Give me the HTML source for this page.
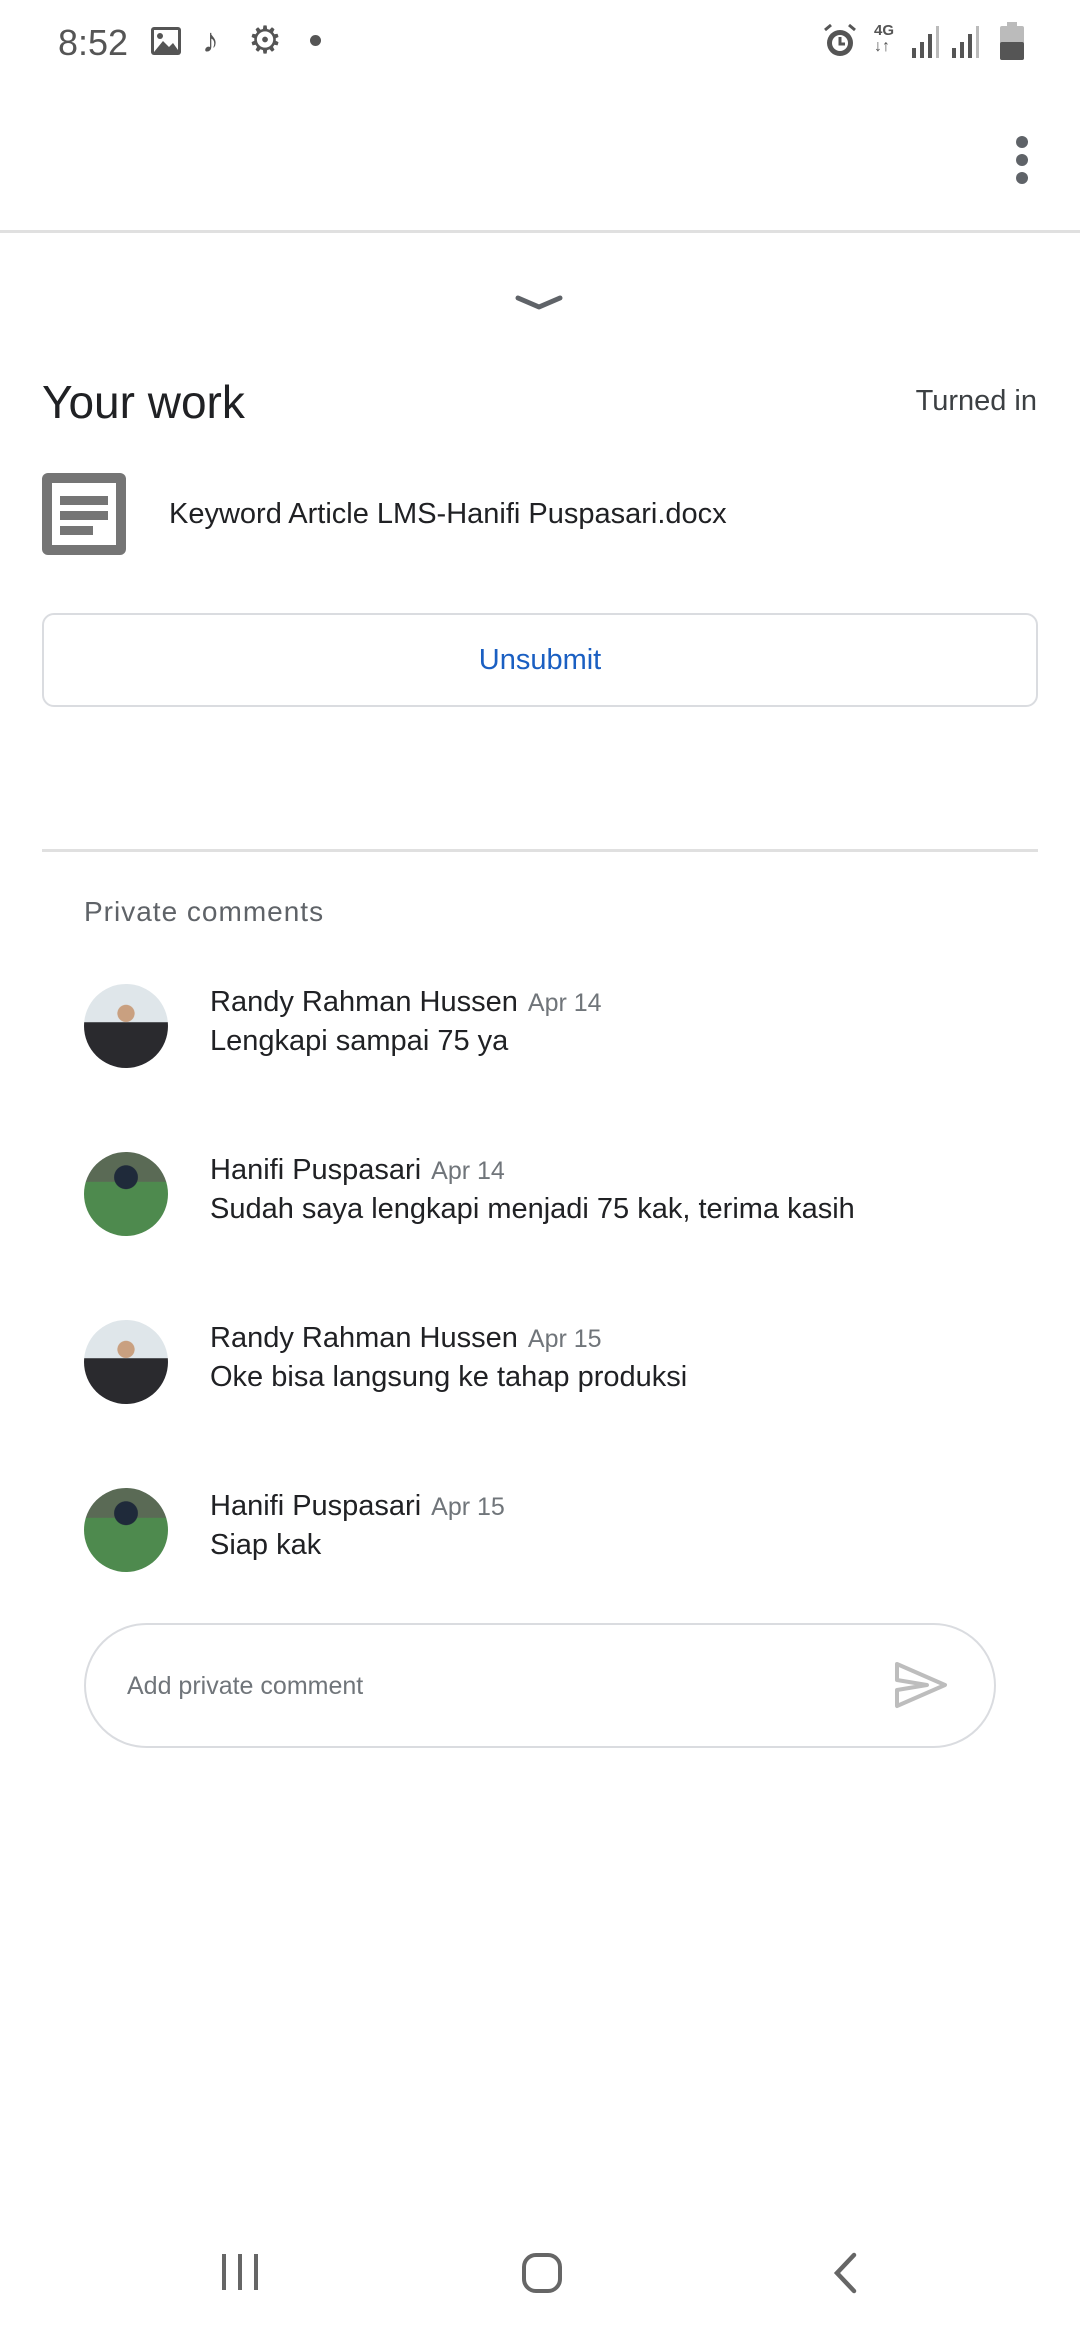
<!DOCTYPE html>
<html><head><meta charset="utf-8"><style>
*{margin:0;padding:0;box-sizing:border-box}
body{width:1080px;height:2340px;background:#fff;font-family:"Liberation Sans",sans-serif;position:relative;overflow:hidden;color:#202124}
.a{position:absolute}
.name{font-size:29px;color:#202124;white-space:nowrap}
.date{font-size:25px;color:#70757a;margin-left:10px}
.msg{font-size:29px;color:#202124;white-space:nowrap}
.av1{background:radial-gradient(circle at 50% 35%,#c9a080 0 12%,transparent 13%),linear-gradient(180deg,#dfe6ea 0 45%,#2a2a2e 46% 100%);}
.av2{background:radial-gradient(circle at 50% 30%,#1f2a3a 0 16%,transparent 17%),linear-gradient(180deg,#5a6a55 0 35%,#4e8a4e 36% 100%);}
</style></head><body>
<!-- status bar -->
<div class="a" style="left:58px;top:22px;font-size:36px;color:#555">8:52</div>
<svg class="a" style="left:150px;top:26px" width="32" height="30" viewBox="0 0 32 30"><rect x="1" y="1" width="30" height="28" rx="3" fill="#555"/><rect x="4" y="4" width="24" height="22" fill="#fff"/><circle cx="10" cy="10" r="3" fill="#555"/><path d="M4 26 L13 15 L19 21 L23 17 L28 24 V26Z" fill="#555"/></svg>
<div class="a" style="left:202px;top:22px;font-size:34px;color:#555">♪</div>
<div class="a" style="left:248px;top:18px;font-size:38px;color:#555">⚙</div>
<div class="a" style="left:310px;top:35px;width:11px;height:11px;border-radius:50%;background:#555"></div>
<svg class="a" style="left:822px;top:22px" width="36" height="38" viewBox="0 0 36 38"><circle cx="18" cy="21" r="13" fill="#555"/><circle cx="18" cy="21" r="8" fill="#fff"/><path d="M18 15v7h5" stroke="#555" stroke-width="3" fill="none"/><path d="M3 8l6-5M33 8l-6-5" stroke="#555" stroke-width="3"/></svg>
<div class="a" style="left:874px;top:22px;font-size:15px;font-weight:bold;color:#555">4G</div>
<div class="a" style="left:874px;top:38px;font-size:16px;color:#555">↓↑</div>
<svg class="a" style="left:910px;top:24px" width="36" height="34"><rect x="2" y="24" width="4" height="10" fill="#555"/><rect x="10" y="18" width="4" height="16" fill="#555"/><rect x="18" y="10" width="4" height="24" fill="#555"/><rect x="26" y="2" width="3" height="32" fill="#bbb"/></svg>
<svg class="a" style="left:950px;top:24px" width="36" height="34"><rect x="2" y="24" width="4" height="10" fill="#555"/><rect x="10" y="18" width="4" height="16" fill="#555"/><rect x="18" y="10" width="4" height="24" fill="#555"/><rect x="26" y="2" width="3" height="32" fill="#bbb"/></svg>
<svg class="a" style="left:1000px;top:22px" width="24" height="38"><rect x="7" y="0" width="10" height="4" fill="#bbb"/><rect x="0" y="4" width="24" height="34" rx="2" fill="#bbb"/><rect x="0" y="20" width="24" height="18" rx="2" fill="#555"/></svg>
<!-- menu dots -->
<div class="a" style="left:1016px;top:136px;width:12px;height:12px;border-radius:50%;background:#5f6368"></div>
<div class="a" style="left:1016px;top:154px;width:12px;height:12px;border-radius:50%;background:#5f6368"></div>
<div class="a" style="left:1016px;top:172px;width:12px;height:12px;border-radius:50%;background:#5f6368"></div>
<div class="a" style="left:0;top:230px;width:1080px;height:3px;background:#e0e0e0"></div>
<!-- chevron -->
<svg class="a" style="left:514px;top:292px" width="50" height="22"><path d="M4 6 L25 15 L46 6" stroke="#5f6368" stroke-width="5" fill="none" stroke-linecap="round" stroke-linejoin="round"/></svg>
<div class="a" style="left:42px;top:375px;font-size:46px;color:#202124">Your work</div>
<div class="a" style="right:43px;top:385px;font-size:29px;color:#3c4043">Turned in</div>
<!-- doc icon -->
<div class="a" style="left:42px;top:473px;width:84px;height:82px;background:#757575;border-radius:6px"></div>
<div class="a" style="left:52px;top:483px;width:64px;height:62px;background:#fff"></div>
<div class="a" style="left:60px;top:496px;width:48px;height:9px;background:#757575"></div>
<div class="a" style="left:60px;top:511px;width:48px;height:9px;background:#757575"></div>
<div class="a" style="left:60px;top:526px;width:33px;height:9px;background:#757575"></div>
<div class="a" style="left:169px;top:498px;font-size:29px;color:#202124">Keyword Article LMS-Hanifi Puspasari.docx</div>
<!-- unsubmit -->
<div class="a" style="left:42px;top:613px;width:996px;height:94px;border:2px solid #dadce0;border-radius:12px;text-align:center;line-height:90px;font-size:29px;color:#1a5fc2">Unsubmit</div>
<div class="a" style="left:42px;top:849px;width:996px;height:3px;background:#e0e0e0"></div>
<div class="a" style="left:84px;top:896px;font-size:28px;letter-spacing:1px;color:#5f6368">Private comments</div>
<!-- comments -->
<div class="a av1" style="left:84px;top:984px;width:84px;height:84px;border-radius:50%"></div>
<div class="a name" style="left:210px;top:986px">Randy Rahman Hussen<span class="date">Apr 14</span></div>
<div class="a msg" style="left:210px;top:1025px">Lengkapi sampai 75 ya</div>
<div class="a av2" style="left:84px;top:1152px;width:84px;height:84px;border-radius:50%"></div>
<div class="a name" style="left:210px;top:1154px">Hanifi Puspasari<span class="date">Apr 14</span></div>
<div class="a msg" style="left:210px;top:1193px">Sudah saya lengkapi menjadi 75 kak, terima kasih</div>
<div class="a av1" style="left:84px;top:1320px;width:84px;height:84px;border-radius:50%"></div>
<div class="a name" style="left:210px;top:1322px">Randy Rahman Hussen<span class="date">Apr 15</span></div>
<div class="a msg" style="left:210px;top:1361px">Oke bisa langsung ke tahap produksi</div>
<div class="a av2" style="left:84px;top:1488px;width:84px;height:84px;border-radius:50%"></div>
<div class="a name" style="left:210px;top:1490px">Hanifi Puspasari<span class="date">Apr 15</span></div>
<div class="a msg" style="left:210px;top:1529px">Siap kak</div>
<!-- input -->
<div class="a" style="left:84px;top:1623px;width:912px;height:125px;border:2px solid #dadce0;border-radius:63px"></div>
<div class="a" style="left:127px;top:1672px;font-size:25px;color:#70757a">Add private comment</div>
<svg class="a" style="left:893px;top:1660px" width="56" height="50" viewBox="0 0 56 50"><path d="M4 4 L52 25 L4 46 L4 30 L34 25 L4 20 Z" fill="none" stroke="#bdbdbd" stroke-width="4" stroke-linejoin="round"/></svg>
<!-- nav bar -->
<div class="a" style="left:222px;top:2254px;width:4px;height:36px;background:#666"></div>
<div class="a" style="left:238px;top:2254px;width:4px;height:36px;background:#666"></div>
<div class="a" style="left:254px;top:2254px;width:4px;height:36px;background:#666"></div>
<div class="a" style="left:522px;top:2253px;width:40px;height:40px;border:4px solid #666;border-radius:14px"></div>
<svg class="a" style="left:830px;top:2252px" width="30" height="42"><path d="M24 3 L7 21 L24 39" stroke="#666" stroke-width="4.5" fill="none" stroke-linecap="round"/></svg>
</body></html>
